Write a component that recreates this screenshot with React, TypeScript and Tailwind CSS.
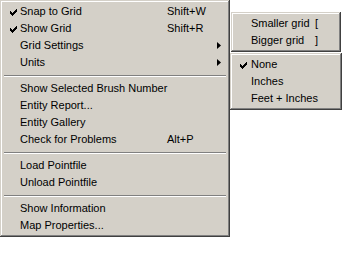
import React from "react";

const bevel =
  "bg-[#d4d0c8] shadow-[inset_-1px_-1px_#404040,inset_1px_1px_#d4d0c8,inset_-2px_-2px_#808080,inset_2px_2px_#ffffff] p-[3px]";

function Check() {
  return (
    <svg width="7" height="7" viewBox="0 0 7 7" className="absolute left-[7px] top-[6px]">
      <path d="M0 2h1v1h1v1h1V3h1V2h1V1h1V0h1v3h-1v1h-1v1h-1v1h-1v1H2V6H1V5H0z" fill="#000" />
    </svg>
  );
}

function Arrow() {
  return (
    <svg width="4" height="7" viewBox="0 0 4 7" className="absolute left-[214px] top-[5px]">
      <path d="M0 0L4 3.5L0 7z" fill="#000" />
    </svg>
  );
}

type Item = { label: string; checked?: boolean; shortcut?: string; sub?: boolean } | "sep";

const items: Item[] = [
  { label: "Snap to Grid", checked: true, shortcut: "Shift+W" },
  { label: "Show Grid", checked: true, shortcut: "Shift+R" },
  { label: "Grid Settings", sub: true },
  { label: "Units", sub: true },
  "sep",
  { label: "Show Selected Brush Number" },
  { label: "Entity Report..." },
  { label: "Entity Gallery" },
  { label: "Check for Problems", shortcut: "Alt+P" },
  "sep",
  { label: "Load Pointfile" },
  { label: "Unload Pointfile" },
  "sep",
  { label: "Show Information" },
  { label: "Map Properties..." },
];

function Sep() {
  return (
    <div className="h-[9px] flex flex-col justify-center px-[1px]">
      <div className="h-px bg-[#808080]" />
      <div className="h-px bg-white" />
    </div>
  );
}

export default function App() {
  return (
    <div
      className="relative w-[345px] h-[263px] bg-white text-[11px] leading-[17px] text-black"
      style={{ fontFamily: '"Liberation Sans", Arial, sans-serif' }}
    >
      <div className={`${bevel} w-[230px]`}>
        {items.map((it, i) =>
          it === "sep" ? (
            <Sep key={i} />
          ) : (
            <div key={i} className="relative h-[17px] flex items-center">
              {it.checked && <Check />}
              <span className="pl-[17px] w-[164px] whitespace-nowrap">{it.label}</span>
              {it.shortcut && <span className="whitespace-nowrap">{it.shortcut}</span>}
              {it.sub && <Arrow />}
            </div>
          )
        )}
      </div>

      <div className={`${bevel} absolute left-[231px] top-[12px] w-[110px]`}>
        <div className="relative h-[17px] flex items-center">
          <span className="pl-[17px] w-[81px] whitespace-nowrap">Smaller grid</span>
          <span>[</span>
        </div>
        <div className="relative h-[17px] flex items-center">
          <span className="pl-[17px] w-[81px] whitespace-nowrap">Bigger grid</span>
          <span>]</span>
        </div>
      </div>

      <div className={`${bevel} absolute left-[230px] top-[53px] w-[112px]`}>
        <div className="relative h-[17px] flex items-center">
          <Check />
          <span className="pl-[18px] whitespace-nowrap">None</span>
        </div>
        <div className="relative h-[17px] flex items-center">
          <span className="pl-[18px] whitespace-nowrap">Inches</span>
        </div>
        <div className="relative h-[17px] flex items-center">
          <span className="pl-[18px] whitespace-nowrap">Feet + Inches</span>
        </div>
      </div>
    </div>
  );
}
